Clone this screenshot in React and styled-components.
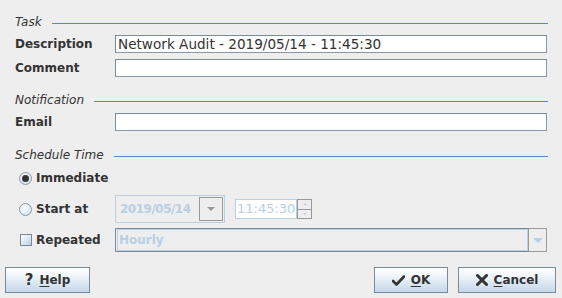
import React from "react";
import styled, { createGlobalStyle, css } from "styled-components";

const Global = createGlobalStyle`
  html, body { margin: 0; padding: 0; background: #eeeeee; }
  body { font-family: "DejaVu Sans", "Liberation Sans", sans-serif; color: #333333; }
  * { box-sizing: border-box; }
`;

const Page = styled.div`
  width: 562px;
  height: 298px;
  display: flex;
  flex-direction: column;
  padding-top: 14px;
`;

const Form = styled.div`
  display: flex;
  flex-direction: column;
  padding: 0 15px 0 15px;
`;

const SectionTitle = styled.div`
  display: flex;
  align-items: flex-start;
  height: 16px;
  margin-top: ${(p) => p.$mt || 0}px;
  margin-bottom: 5px;
  font-size: 12px;
  line-height: 16px;
  font-style: italic;
  color: #333333;
  gap: 10px;
  &::after {
    content: "";
    flex: 1;
    height: 9px;
    border-bottom: 1px solid #6382bf;
    margin-right: -1px;
  }
`;

const FieldRow = styled.div`
  display: grid;
  grid-template-columns: 100px 1fr;
  align-items: center;
  height: 18px;
  margin-top: ${(p) => p.$mt || 0}px;
`;

const Label = styled.span`
  font-size: 12px;
  font-weight: bold;
  color: #333333;
  white-space: nowrap;
`;

const TextInput = styled.div`
  height: 18px;
  background: #ffffff;
  border: 1px solid #7a8a99;
  border-right-color: #8a98a6;
  border-bottom-color: #8a98a6;
  font-size: 13.6px;
  line-height: 16px;
  padding-left: 2px;
  color: #333333;
  white-space: nowrap;
  overflow: hidden;
`;

const OptionRow = styled.div`
  display: grid;
  grid-template-columns: 100px auto 1fr;
  align-items: center;
  height: ${(p) => p.$h}px;
  margin-top: ${(p) => p.$mt || 0}px;
`;

const OptionLabel = styled.label`
  display: flex;
  align-items: center;
  gap: 4px;
  padding-left: ${(p) => p.$pl || 4}px;
  font-size: 12px;
  font-weight: bold;
  color: #333333;
`;

const Radio = styled.span`
  width: 13px;
  height: 13px;
  border-radius: 50%;
  border: 1px solid #8a9aad;
  background: radial-gradient(circle at 40% 35%, #ffffff 0%, #e3ecf6 55%, #b8cfe5 100%);
  display: flex;
  align-items: center;
  justify-content: center;
  ${(p) =>
    p.$checked &&
    css`
      &::after {
        content: "";
        width: 7px;
        height: 7px;
        border-radius: 50%;
        background: #333333;
      }
    `}
`;

const Check = styled.span`
  width: 12px;
  height: 12px;
  margin-left: 1px;
  border: 1px solid #7a8a99;
  background: linear-gradient(135deg, #ffffff 0%, #dde8f3 50%, #b8cfe5 100%);
`;

const DateCombo = styled.div`
  width: 110px;
  height: 28px;
  border: 1px solid #b8cfe5;
  display: flex;
  align-items: center;
  justify-content: space-between;
  padding: 1px 1px 1px 4px;
  font-size: 12px;
  letter-spacing: -0.5px;
  font-weight: bold;
  color: #b8cfe5;
`;

const ArrowBox = styled.div`
  width: ${(p) => p.$w}px;
  height: ${(p) => p.$h}px;
  border: 1px solid #999999;
  display: flex;
  align-items: center;
  justify-content: center;
  flex: none;
  &::after {
    content: "";
    border-left: 5px solid transparent;
    border-right: 5px solid transparent;
    border-top: 5px solid ${(p) => p.$arrow};
    ${(p) => p.$small && css`
      border-left-width: 4px;
      border-right-width: 4px;
      border-top-width: 4px;
    `}
  }
`;

const TimeSpinner = styled.div`
  display: flex;
  height: 20px;
  margin-left: 10px;
`;

const TimeText = styled.div`
  width: 62px;
  height: 20px;
  border: 1px solid #b8cfe5;
  font-size: 13px;
  line-height: 18px;
  padding-left: 1px;
  color: #b8cfe5;
  background: #ffffff;
  white-space: nowrap;
  overflow: hidden;
`;

const SpinCol = styled.div`
  display: flex;
  flex-direction: column;
  width: 15px;
`;

const SpinBtn = styled.div`
  flex: 1;
  border: 1px solid #999999;
  ${(p) => p.$down && css`border-top: none;`}
  display: flex;
  align-items: center;
  justify-content: center;
  &::after {
    content: "";
    border-left: 2px solid transparent;
    border-right: 2px solid transparent;
    ${(p) => (p.$down ? css`border-top: 2px solid #b8cfe5;` : css`border-bottom: 2px solid #b8cfe5;`)}
  }
`;

const RepeatCombo = styled.div`
  grid-column: 2 / 4;
  height: 24px;
  display: flex;
`;

const RepeatText = styled.div`
  flex: 1;
  border: 1px solid #7a8a99;
  border-right: none;
  display: flex;
  align-items: center;
  padding-left: 1px;
`;

const RepeatInner = styled.div`
  flex: 1;
  height: 100%;
  border: 1px solid #b8cfe5;
  font-size: 12px;
  font-weight: bold;
  color: #b8cfe5;
  line-height: 20px;
  padding-left: 1px;
`;

const ButtonBar = styled.div`
  display: flex;
  align-items: center;
  margin-top: 15px;
  padding: 0 6px 0 5px;
  gap: 10px;
`;

const Spacer = styled.div`
  flex: 1;
`;

const Button = styled.button`
  width: ${(p) => p.$w}px;
  height: 26px;
  border: 1px solid #7a8a99;
  background: linear-gradient(to bottom, #ffffff 0%, #f2f6fa 30%, #dde8f3 60%, #c6d8ea 100%);
  display: flex;
  align-items: center;
  justify-content: center;
  gap: 6px;
  font-family: "DejaVu Sans", sans-serif;
  font-size: 12px;
  font-weight: bold;
  color: #333333;
  padding: 0;
  u { text-decoration-thickness: 1px; text-underline-offset: 2px; }
`;

const Glyph = styled.span`
  font-size: 15px;
  font-weight: bold;
`;

const CheckIcon = () => (
  <svg width="13" height="11" viewBox="0 0 13 11">
    <path d="M1 6 L4.5 9.5 L12 1.5" fill="none" stroke="#333" strokeWidth="2.6" strokeLinecap="round" strokeLinejoin="round" />
  </svg>
);

const XIcon = () => (
  <svg width="12" height="12" viewBox="0 0 12 12">
    <path d="M1.5 1.5 L10.5 10.5 M10.5 1.5 L1.5 10.5" stroke="#333" strokeWidth="3" strokeLinecap="round" />
  </svg>
);

export default function App() {
  return (
    <>
      <Global />
      <Page>
        <Form>
          <SectionTitle>Task</SectionTitle>
          <FieldRow>
            <Label>Description</Label>
            <TextInput>Network Audit - 2019/05/14 - 11:45:30</TextInput>
          </FieldRow>
          <FieldRow $mt={6}>
            <Label>Comment</Label>
            <TextInput />
          </FieldRow>

          <SectionTitle $mt={15}>Notification</SectionTitle>
          <FieldRow>
            <Label>Email</Label>
            <TextInput />
          </FieldRow>

          <SectionTitle $mt={16}>Schedule Time</SectionTitle>
          <OptionRow $h={20}>
            <OptionLabel>
              <Radio $checked />
              Immediate
            </OptionLabel>
          </OptionRow>
          <OptionRow $h={28} $mt={7}>
            <OptionLabel>
              <Radio />
              Start at
            </OptionLabel>
            <DateCombo>
              2019/05/14
              <ArrowBox $w={24} $h={24} $arrow="#999999" $small />
            </DateCombo>
            <TimeSpinner>
              <TimeText>11:45:30</TimeText>
              <SpinCol>
                <SpinBtn />
                <SpinBtn $down />
              </SpinCol>
            </TimeSpinner>
          </OptionRow>
          <OptionRow $h={24} $mt={5}>
            <OptionLabel>
              <Check />
              Repeated
            </OptionLabel>
            <RepeatCombo>
              <RepeatText>
                <RepeatInner>Hourly</RepeatInner>
              </RepeatText>
              <ArrowBox $w={19} $h={24} $arrow="#b8cfe5" />
            </RepeatCombo>
          </OptionRow>
        </Form>
        <ButtonBar>
          <Button $w={85}>
            <Glyph>?</Glyph>
            <span><u>H</u>elp</span>
          </Button>
          <Spacer />
          <Button $w={74}>
            <CheckIcon />
            <span><u>O</u>K</span>
          </Button>
          <Button $w={98}>
            <XIcon />
            <span><u>C</u>ancel</span>
          </Button>
        </ButtonBar>
      </Page>
    </>
  );
}
